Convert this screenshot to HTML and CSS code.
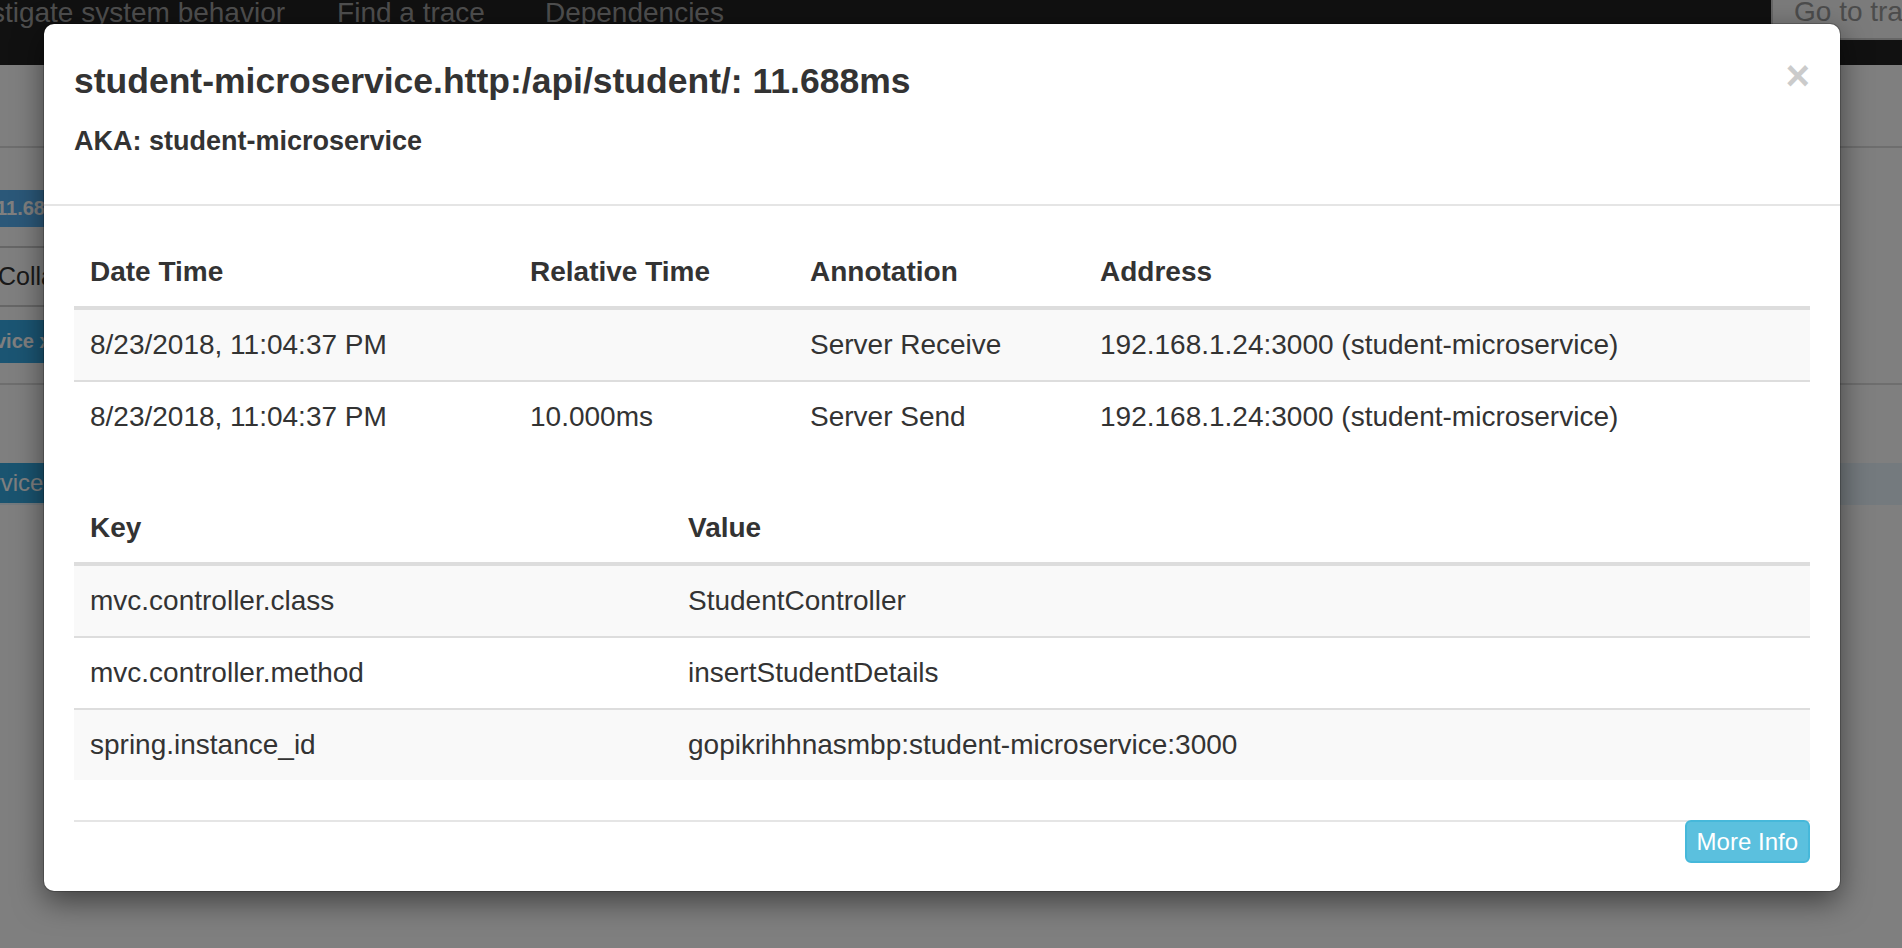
FILE: index.html
```html
<!DOCTYPE html>
<html lang="en">
<head>
<meta charset="utf-8">
<title>Zipkin - Span details</title>
<link rel="stylesheet" href="styles.css">
</head>
<body>
<div class="page">
  <nav class="topnav">
    <ul class="nav-links">
      <li>Investigate system behavior</li>
      <li>Find a trace</li>
      <li>Dependencies</li>
    </ul>
    <div class="goto">Go to trace</div>
  </nav>
  <div class="summary"></div>
  <div class="trace-head">
    <span class="label label-duration">11.688ms</span>
  </div>
  <div class="collapse-row">
    <span class="btn-collapse">Collapse All</span>
  </div>
  <div class="filter-row">
    <span class="label label-service">vice x</span>
  </div>
  <div class="span-gap"></div>
  <div class="span-row">
    <div class="span-bar">student-microservice</div>
  </div>
</div>

<div class="backdrop"></div>

<div class="modal">
  <div class="modal-header">
    <button class="close" type="button">&times;</button>
    <h4 class="modal-title">student-microservice.http:/api/student/: 11.688ms</h4>
    <h5 class="aka">AKA: student-microservice</h5>
  </div>
  <div class="modal-body">
    <table class="table">
      <colgroup>
        <col class="c-date"><col class="c-rel"><col class="c-ann"><col>
      </colgroup>
      <thead>
        <tr><th>Date Time</th><th>Relative Time</th><th>Annotation</th><th>Address</th></tr>
      </thead>
      <tbody>
        <tr><td>8/23/2018, 11:04:37 PM</td><td></td><td>Server Receive</td><td>192.168.1.24:3000 (student-microservice)</td></tr>
        <tr><td>8/23/2018, 11:04:37 PM</td><td>10.000ms</td><td>Server Send</td><td>192.168.1.24:3000 (student-microservice)</td></tr>
      </tbody>
    </table>
    <table class="table">
      <colgroup>
        <col class="c-key"><col>
      </colgroup>
      <thead>
        <tr><th>Key</th><th>Value</th></tr>
      </thead>
      <tbody>
        <tr><td>mvc.controller.class</td><td>StudentController</td></tr>
        <tr><td>mvc.controller.method</td><td>insertStudentDetails</td></tr>
        <tr><td>spring.instance_id</td><td>gopikrihhnasmbp:student-microservice:3000</td></tr>
      </tbody>
    </table>
    <div class="modal-footer">
      <button class="btn-info" type="button">More Info</button>
    </div>
  </div>
</div>
</body>
</html>
```

FILE: styles.css
```css
* { box-sizing: border-box; }

html, body {
  margin: 0;
  padding: 0;
}

body {
  position: relative;
  width: 1902px;
  height: 948px;
  overflow: hidden;
  background: #fff;
  font-family: "Liberation Sans", Arial, Helvetica, sans-serif;
  color: #333;
}

/* ---------- underlying page ---------- */
.topnav {
  height: 65px;
  background: #222;
  display: flex;
  align-items: flex-start;
}

.nav-links {
  list-style: none;
  margin: -7px 0 0 -92px;
  padding: 0;
  display: flex;
}

.nav-links li {
  padding: 0 30px;
  font-size: 28px;
  line-height: 40px;
  color: #9d9d9d;
  white-space: nowrap;
}

.nav-links li:first-child {
  padding-right: 22px;
}

.goto {
  margin-left: auto;
  margin-top: -20px;
  width: 131px;
  height: 60px;
  padding: 10px 0 0 21px;
  border: 2px solid #ccc;
  border-right: 0;
  border-radius: 0 0 0 8px;
  background: #f6f6f6;
  color: #999;
  font-size: 28px;
  line-height: 40px;
  white-space: nowrap;
  overflow: hidden;
}

.summary {
  height: 83px;
  border-bottom: 2px solid #ddd;
}

.trace-head {
  height: 98px;
  padding-top: 42px;
}

.label {
  display: inline-block;
  color: #fff;
  font-weight: bold;
  white-space: nowrap;
}

.label-duration {
  margin-left: -16px;
  padding: 0 12px;
  height: 37px;
  line-height: 37px;
  font-size: 20px;
  background: #56b0f2;
  border-radius: 0 6px 6px 0;
}

.collapse-row {
  height: 61px;
}

.btn-collapse {
  display: inline-block;
  margin-left: -32px;
  height: 61px;
  padding: 0 28px;
  border: 2px solid #ccc;
  background: #fff;
  color: #333;
  font-size: 25px;
  line-height: 57px;
  white-space: nowrap;
}

.filter-row {
  height: 78px;
  padding-top: 13px;
  border-bottom: 2px solid #ddd;
}

.label-service {
  margin-left: -17px;
  padding: 0 12px;
  height: 43px;
  line-height: 43px;
  font-size: 20px;
  background: #36aae6;
}

.span-gap {
  height: 78px;
}

.span-row {
  height: 42px;
  background: #e8f4fc;
}

.span-bar {
  width: 600px;
  height: 40px;
  margin-left: -190px;
  padding-left: 12px;
  background: #34a8e0;
  color: #fff;
  font-size: 24px;
  line-height: 40px;
  white-space: nowrap;
}

/* ---------- backdrop ---------- */
.backdrop {
  position: absolute;
  inset: 0;
  background: rgba(0, 0, 0, 0.5);
}

/* ---------- modal ---------- */
.modal {
  position: absolute;
  left: 44px;
  top: 24px;
  width: 1796px;
  background: #fff;
  border-radius: 10px;
  box-shadow: 0 10px 30px rgba(0, 0, 0, 0.5), 0 0 0 1px rgba(0, 0, 0, 0.2);
}

.modal-header {
  padding: 30px;
  border-bottom: 2px solid #e5e5e5;
}

.close {
  float: right;
  margin-top: 1px;
  padding: 0;
  border: 0;
  background: transparent;
  font-family: "Liberation Sans", Arial, sans-serif;
  font-size: 42px;
  font-weight: bold;
  line-height: 42px;
  color: #000;
  opacity: 0.2;
}

.modal-title {
  margin: 0;
  font-size: 35.5px;
  line-height: 54px;
  font-weight: bold;
  color: #333;
}

.aka {
  margin: 18px 0;
  font-size: 27px;
  line-height: 30px;
  font-weight: bold;
  color: #333;
}

.modal-body {
  padding: 30px 30px 28px;
}

.table {
  width: 100%;
  table-layout: fixed;
  border-collapse: separate;
  border-spacing: 0;
  margin-bottom: 40px;
  font-size: 28px;
  line-height: 40px;
}

.c-date { width: 440px; }
.c-rel { width: 280px; }
.c-ann { width: 290px; }
.c-key { width: 598px; }

.table th {
  text-align: left;
  vertical-align: bottom;
  padding: 16px 16px 14px;
  border-bottom: 4px solid #ddd;
  font-weight: bold;
  white-space: nowrap;
}

.table td {
  padding: 15px 16px;
  border-top: 2px solid #ddd;
  white-space: nowrap;
}

.table tbody tr:first-child td {
  border-top: 0;
}

.table tbody tr:nth-child(odd) td {
  background: #f9f9f9;
}

.modal-footer {
  display: flex;
  justify-content: flex-end;
  border-top: 2px solid #e5e5e5;
}

.btn-info {
  margin-top: -2px;
  height: 43px;
  padding: 0 10px;
  border: 2px solid #46b8da;
  border-radius: 6px;
  background: #5bc0de;
  color: #fff;
  font-family: "Liberation Sans", Arial, sans-serif;
  font-size: 24px;
  line-height: 37px;
}
```
